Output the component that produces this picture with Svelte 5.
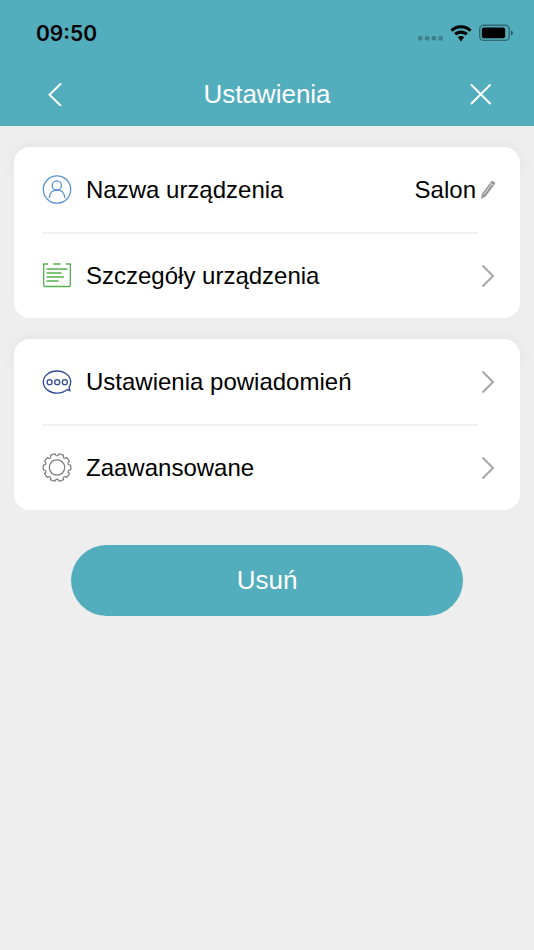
<script>
  let deviceName = 'Salon';

  const groups = [
    [
      { icon: 'user', label: 'Nazwa urządzenia', editable: true },
      { icon: 'details', label: 'Szczegóły urządzenia' }
    ],
    [
      { icon: 'message', label: 'Ustawienia powiadomień' },
      { icon: 'gear', label: 'Zaawansowane' }
    ]
  ];

  /* outline of the gear: ten teeth with shallow rounded notches */
  function gearPath(cx, cy, outer, inner) {
    const at = (deg, r) => {
      const a = (deg * Math.PI) / 180;
      return `${(cx + r * Math.cos(a)).toFixed(2)} ${(cy + r * Math.sin(a)).toFixed(2)}`;
    };
    let d = `M${at(-10, outer)}`;
    for (let i = 0; i < 10; i++) {
      const deg = i * 36;
      d += `Q${at(deg, outer + 0.3)} ${at(deg + 10, outer)}`;
      d += `C${at(deg + 12, inner - 0.3)} ${at(deg + 24, inner - 0.3)} ${at(deg + 26, outer)}`;
    }
    return d + 'Z';
  }
</script>

<div class="screen">
  <header>
    <div class="status-bar">
      <span class="time">09:50</span>
      <div class="indicators">
        <svg class="signal" width="26" height="24" viewBox="0 0 26 24" aria-hidden="true">
          <rect x="1" y="15" width="4.600" height="4.600" rx="1.600" />
          <rect x="7.800" y="15" width="4.600" height="4.600" rx="1.600" />
          <rect x="14.600" y="15" width="4.600" height="4.600" rx="1.600" />
          <rect x="21.400" y="15" width="4.600" height="4.600" rx="1.600" />
        </svg>
        <svg width="22" height="24" viewBox="0 0 22 24" aria-hidden="true">
          <path d="M11 4.2C6.900 4.200 3.200 5.800.400 8.400L2.500 10.700C4.700 8.600 7.700 7.300 11 7.300S17.300 8.600 19.500 10.700L21.600 8.400C18.800 5.800 15.100 4.200 11 4.200Z" />
          <path d="M11 9.600C8.400 9.600 6 10.600 4.200 12.300L6.400 14.600C7.600 13.500 9.200 12.800 11 12.800S14.400 13.500 15.600 14.600L17.800 12.300C16 10.600 13.600 9.600 11 9.600Z" />
          <path d="M11 15C9.800 15 8.800 15.400 8 16.200L11 20.400L14 16.200C13.200 15.400 12.200 15 11 15Z" />
        </svg>
        <svg width="35" height="24" viewBox="0 0 35 24" aria-hidden="true">
          <rect class="battery-case" x="0.700" y="4.200" width="29.600" height="15.200" rx="4" />
          <rect x="2.800" y="6.600" width="23.400" height="10.600" rx="2" />
          <path class="battery-tip" d="M32 9.600C34.600 10.400 34.600 13.400 32 14.200Z" />
        </svg>
      </div>
    </div>

    <nav>
      <button class="nav-button" aria-label="Wstecz">
        <svg width="24" height="24" viewBox="0 0 24 24"><path d="M18.500 2L7.500 12.800L18.500 23.500" /></svg>
      </button>
      <h1>Ustawienia</h1>
      <button class="nav-button" aria-label="Zamknij">
        <svg width="24" height="24" viewBox="0 0 24 24"><path d="M3.500 3L22 21.500M22 3L3.500 21.500" /></svg>
      </button>
    </nav>
  </header>

  <main>
    {#each groups as group}
      <section class="card">
        {#each group as item}
          <button class="row">
            <svg class="icon {item.icon}" width="30" height="30" viewBox="0 0 30 30" aria-hidden="true">
              {#if item.icon === 'user'}
                <circle cx="15" cy="14.500" r="13.700" />
                <circle cx="14.800" cy="10.400" r="4.600" />
                <path d="M7.400 23.100C7.400 18.100 10.300 15 15 15S22.700 18.100 22.700 23.100" />
              {:else if item.icon === 'details'}
                <path d="M6 3H1.700V24.600Q1.700 25.500 2.600 25.500H27.400Q28.300 25.500 28.300 24.600V3H24M11.500 3H18.500" />
                <path d="M4.500 8H25.500M4.500 12H19.500M4.500 16H22M4.500 20H16.500" />
              {:else if item.icon === 'message'}
                <path d="M25.400 22.600C22.900 24.800 19.200 26.100 15 26.100C7.400 26.100 1.300 21.200 1.300 15S7.400 4 15 4S28.700 8.900 28.700 15C28.700 16.900 28.100 18.700 27.100 20.200L27.900 23.600Z" />
                <circle cx="7.600" cy="15.200" r="2.500" />
                <circle cx="15.200" cy="15.200" r="2.500" />
                <circle cx="22.800" cy="15.200" r="2.500" />
              {:else}
                <path d={gearPath(15, 14.5, 13.8, 11.4)} />
                <circle cx="15" cy="14.500" r="7.700" />
              {/if}
            </svg>
            <span class="label">{item.label}</span>
            {#if item.editable}
              <span class="value">{deviceName}</span>
              <svg class="pencil" width="16" height="22" viewBox="0 0 16 22" aria-hidden="true">
                <path class="shaft" d="M1 20L1.800 15L11.200 2.200Q12 1.400 13 2L14.800 3.300Q15.600 4 15 5L5.600 17.600Z" />
                <path class="edge" d="M3.800 15.600L11.600 5M10 4L13.700 6.700" />
              </svg>
            {:else}
              <svg class="chevron" width="16" height="24" viewBox="0 0 16 24" aria-hidden="true">
                <path d="M2.500 1.500L13 12L2.500 22.500" />
              </svg>
            {/if}
          </button>
        {/each}
      </section>
    {/each}

    <button class="delete">Usuń</button>
  </main>
</div>

<style>
  :global(body) {
    background-color: #eee;
  }

  .screen {
    min-height: 100vh;
    background-color: #eee;
    color: #000;
    font-family: "Liberation Sans", Arial, sans-serif;
  }

  button {
    padding: 0;
    border: none;
    background: none;
    color: inherit;
    font: inherit;
    cursor: pointer;
  }

  header {
    background-color: #52adbd;
  }

  .status-bar {
    display: flex;
    align-items: center;
    justify-content: space-between;
    height: 66px;
    padding: 0 20px 0 36px;
  }

  .time {
    font-family: Inter, sans-serif;
    font-size: 21px;
    font-weight: 600;
  }

  .indicators {
    display: flex;
    gap: 7px;
  }

  .signal {
    opacity: 0.25;
  }

  .battery-tip {
    opacity: 0.5;
  }

  .battery-case {
    fill: none;
    stroke: #000;
    stroke-width: 1.4;
    stroke-opacity: 0.4;
  }

  nav {
    display: flex;
    align-items: center;
    justify-content: space-between;
    height: 56px;
    padding: 0 32px 4px;
  }

  .nav-button {
    display: flex;
    align-items: center;
    justify-content: center;
    width: 44px;
    height: 44px;
  }

  .nav-button path {
    fill: none;
    stroke: #fff;
    stroke-width: 2;
    stroke-linecap: round;
  }

  h1 {
    margin: 0;
    color: #fff;
    font-size: 26px;
    font-weight: normal;
  }

  main {
    position: relative;
    z-index: 0;
    display: flex;
    flex-direction: column;
    gap: 21px;
    padding: 21px 14px;
  }

  .card {
    position: relative;
    display: flex;
    flex-direction: column;
    gap: 1px;
    border-radius: 16px;
    background-color: #fff;
  }

  /* soft shadow round the top of the card only */
  .card::before {
    content: "";
    position: absolute;
    inset: 0 0 auto;
    z-index: -1;
    height: 32px;
    border-radius: 16px;
    box-shadow: 0 0 16px rgb(0 0 0 / 6%);
  }

  .row {
    display: flex;
    align-items: center;
    width: 100%;
    height: 85px;
    padding: 0 24px 0 28px;
    font-size: 24px;
    text-align: left;
  }

  .row + .row::before {
    content: "";
    position: absolute;
    left: 29px;
    right: 42px;
    top: 85px;
    height: 2px;
    background-color: #f0f0f0;
  }

  .icon {
    flex: none;
    margin-right: 14px;
    fill: none;
    stroke-width: 1.3;
  }

  .user {
    stroke: #5b93d3;
  }

  .details {
    stroke: #55b04e;
  }

  .message {
    stroke: #2f4a92;
  }

  .gear {
    stroke: #808080;
    stroke-linejoin: round;
  }

  .label {
    flex: 1;
  }

  .pencil {
    margin-left: 4px;
  }

  .shaft {
    fill: #999;
  }

  .edge {
    fill: none;
    stroke: #ddd;
    stroke-width: 1;
  }

  .chevron {
    fill: none;
    stroke: #a6a6a6;
    stroke-width: 2;
  }

  .delete {
    height: 71px;
    margin: 14px 57px;
    border-radius: 36px;
    background-color: #52adbd;
    color: #fff;
    font-size: 26px;
  }
</style>
